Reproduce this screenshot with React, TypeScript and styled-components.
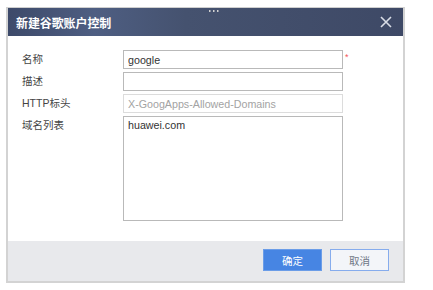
import styled, { createGlobalStyle } from "styled-components";

const GlobalStyles = createGlobalStyle`
  html, body {
    margin: 0;
    padding: 0;
    background: #ffffff;
    font-family: "Liberation Sans", "Noto Sans CJK SC", sans-serif;
  }
`;

export default function App() {
  return <>
    <GlobalStyles />
    <Dialog>
      <Grip>
        <svg width="10" height="2" viewBox="0 0 10 2">
          <rect x="0" y="0" width="1.5" height="2" fill="#d0d0d0" />
          <rect x="4" y="0" width="1.5" height="2" fill="#d0d0d0" />
          <rect x="8" y="0" width="1.5" height="2" fill="#d0d0d0" />
        </svg>
      </Grip>
      <Header>
        <Title>新建谷歌账户控制</Title>
        <CloseButton aria-label="close">
          <svg width="12" height="12" viewBox="0 0 12 12">
            <path d="M1 1 L11 11 M11 1 L1 11" stroke="#d9dde6" strokeWidth="1.6" fill="none" />
          </svg>
        </CloseButton>
      </Header>
      <Body>
        <Form>
          <Label>名称</Label>
          <Input defaultValue="google" />
          <Required>*</Required>

          <Label>描述</Label>
          <Input defaultValue="" />
          <span />

          <Label>HTTP标头</Label>
          <Input value="X-GoogApps-Allowed-Domains" disabled readOnly />
          <span />

          <Label>域名列表</Label>
          <TextArea defaultValue="huawei.com" />
          <span />
        </Form>
      </Body>
      <Footer>
        <Button $primary>确定</Button>
        <Button>取消</Button>
      </Footer>
    </Dialog>
  </>;
}

const Dialog = styled.div`
  position: relative;
  box-sizing: border-box;
  width: 399px;
  margin: 7px 0 0 6px;
  border: 2px solid #d3d3d3;
  border-top: 1px solid #cfcfcf;
  background: #fff;
`;

const Grip = styled.div`
  position: absolute;
  top: -1px;
  left: 201px;
  line-height: 0;
`;

const Header = styled.div`
  height: 28px;
  display: flex;
  align-items: center;
  justify-content: space-between;
  padding: 0 11px 0 8px;
  background: linear-gradient(90deg, #3d4a6a 0%, #4e5e82 22%, #45526f 45%, #3e4966 100%);
`;

const Title = styled.div`
  color: #ffffff;
  font-size: 12px;
  font-weight: bold;
  letter-spacing: -0.1px;
`;

const CloseButton = styled.div`
  width: 12px;
  height: 12px;
  line-height: 0;
`;

const Body = styled.div`
  padding: 14px 0 20px 14px;
`;

const Form = styled.div`
  display: grid;
  grid-template-columns: 101px 220px auto;
  row-gap: 3px;
  align-items: start;
`;

const Label = styled.div`
  font-size: 10.5px;
  color: #444;
  line-height: 19px;
`;

const Input = styled.input`
  box-sizing: border-box;
  width: 220px;
  height: 19px;
  margin: 0;
  padding: 0 4px;
  border: 1px solid #b9b9b9;
  font-family: "Liberation Sans", "Noto Sans CJK SC", sans-serif;
  font-size: 10.7px;
  color: #333;
  background: #fff;
  outline: none;

  &:disabled {
    border-color: #dcdcdc;
    color: #a3a3a3;
    background: #fff;
  }
`;

const TextArea = styled.textarea`
  box-sizing: border-box;
  width: 220px;
  height: 105px;
  margin: 0;
  padding: 2px 4px;
  border: 1px solid #b9b9b9;
  font-family: "Liberation Sans", "Noto Sans CJK SC", sans-serif;
  font-size: 10.7px;
  color: #333;
  resize: none;
  outline: none;
`;

const Required = styled.span`
  color: #f4535b;
  font-size: 9px;
  padding-left: 2px;
  line-height: 14px;
`;

const Footer = styled.div`
  height: 40px;
  box-sizing: border-box;
  display: flex;
  align-items: center;
  justify-content: flex-end;
  gap: 8px;
  padding: 0 14px 2px 0;
  background: #e8e9ec;
`;

const Button = styled.button<{ $primary?: boolean }>`
  box-sizing: border-box;
  width: 59px;
  height: 22px;
  margin: 0;
  padding: 0;
  font-family: "Liberation Sans", "Noto Sans CJK SC", sans-serif;
  font-size: 10.5px;
  border: 1px solid ${p => p.$primary ? "#6b9de8" : "#86aced"};
  background: ${p => p.$primary ? "#4785e3" : "#f3f5f9"};
  color: ${p => p.$primary ? "#ffffff" : "#6f7686"};
  cursor: pointer;
`;
